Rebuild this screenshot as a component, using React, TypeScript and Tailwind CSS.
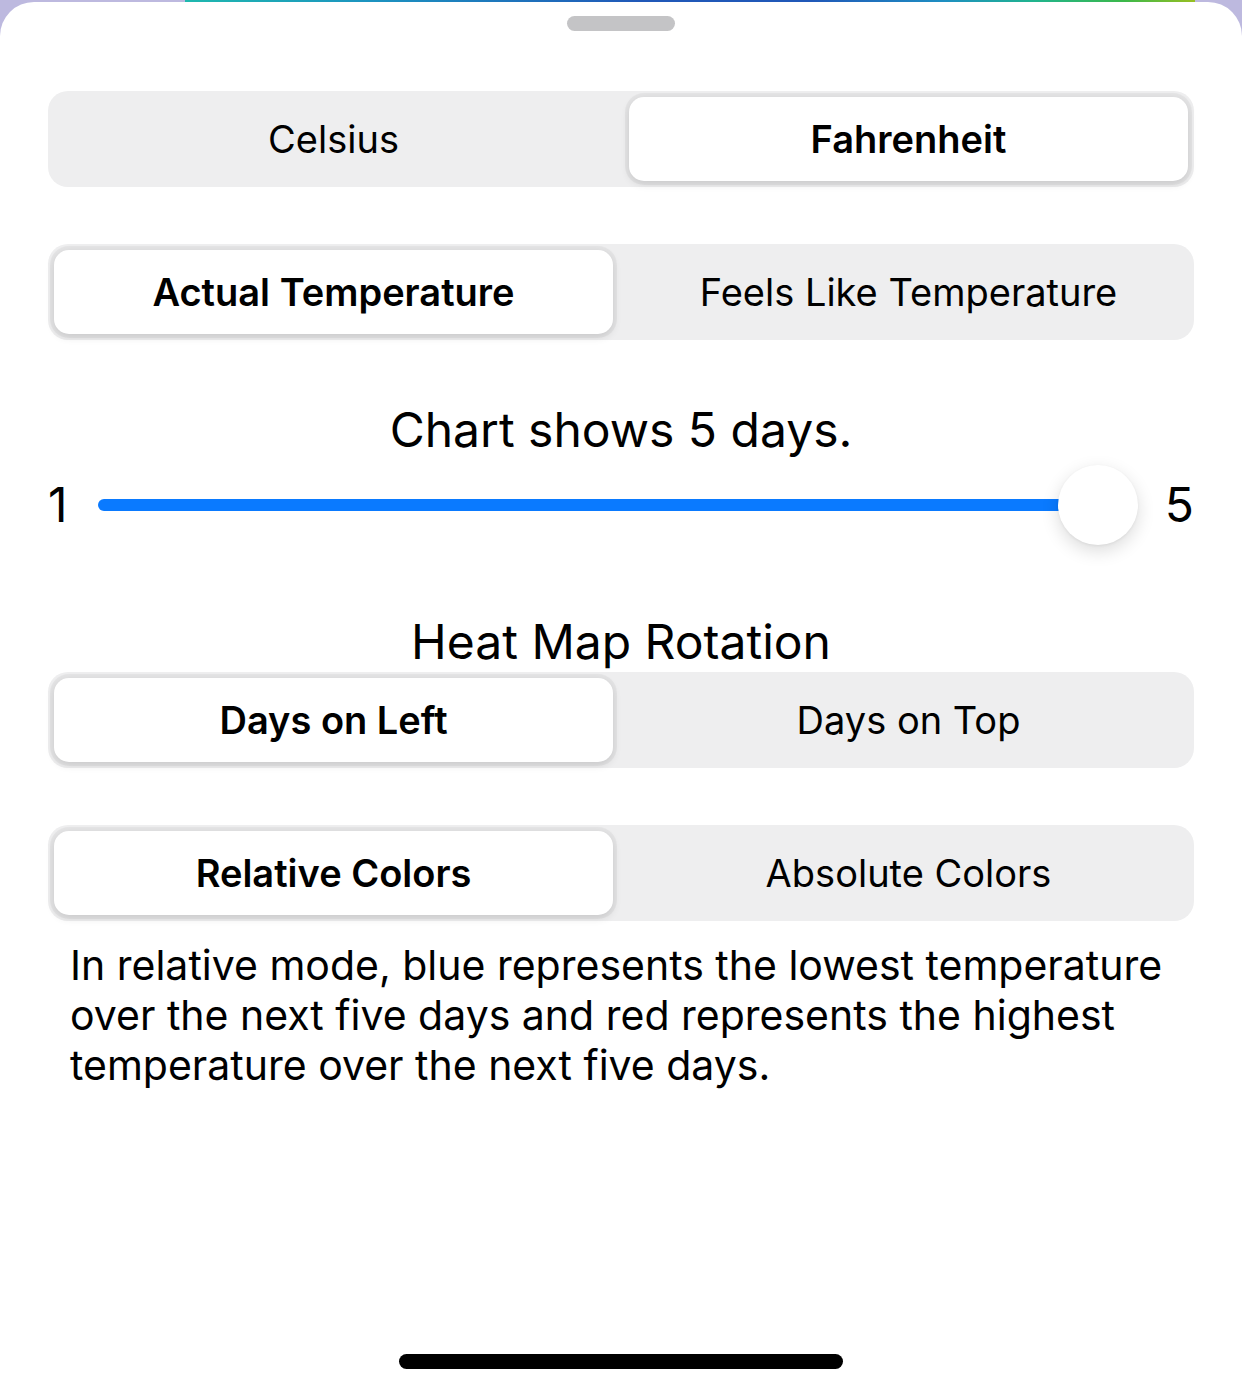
import React from 'react';

const font = { fontFamily: 'Inter, "Noto Sans", sans-serif' };

const Segmented = ({ options, selected }: { options: string[]; selected: number }) => (
  <div className="grid grid-cols-2 gap-[16px] h-[96px] rounded-[20px] bg-[#eeeeef] p-[6px]">
    {options.map((opt, i) =>
      i === selected ? (
        <div
          key={opt}
          className="flex items-center justify-center rounded-[15px] bg-white text-[38px] font-semibold text-black shadow-[0_3px_8px_rgba(0,0,0,0.12),0_0_0_4px_rgba(0,0,0,0.04)]"
        >
          {opt}
        </div>
      ) : (
        <div key={opt} className="flex items-center justify-center text-[38px] text-black">
          {opt}
        </div>
      )
    )}
  </div>
);

export default function App() {
  return (
    <div className="w-[1242px] h-[1393px] flex flex-col bg-[#bdb9df] overflow-hidden" style={font}>
      <div className="flex h-[2px] shrink-0">
        <div className="w-[185px]" />
        <div className="w-[1010px] bg-[linear-gradient(90deg,#1fb8ae_0%,#1c94c0_18%,#2058b8_45%,#2058b8_62%,#1e8ec2_75%,#20b48e_84%,#3cb84a_93%,#98bf22_100%)]" />
      </div>
      <div className="flex-1 flex flex-col bg-white rounded-t-[34px] px-[48px]">
        <div className="flex justify-center pt-[14px]">
          <div className="w-[108px] h-[15px] rounded-full bg-[#c4c4c6]" />
        </div>

        <div className="mt-[60px]">
          <Segmented options={['Celsius', 'Fahrenheit']} selected={1} />
        </div>
        <div className="mt-[57px]">
          <Segmented options={['Actual Temperature', 'Feels Like Temperature']} selected={0} />
        </div>

        <div className="mt-[61px] text-center text-[48px] leading-[58px] text-black">Chart shows 5 days.</div>

        <div className="flex items-center h-[90px] mt-[1px]">
          <span className="w-[50px] text-[48px] text-black">1</span>
          <div className="relative flex-1 flex items-center">
            <div className="h-[12px] flex-1 rounded-full bg-[#0a7aff]" />
            <div className="absolute right-[-40px] w-[80px] h-[80px] rounded-full bg-white shadow-[0_6px_18px_rgba(0,0,0,0.14),0_1px_3px_rgba(0,0,0,0.06)]" />
          </div>
          <span className="w-[96px] text-right text-[48px] text-black">5</span>
        </div>

        <div className="mt-[63px] text-center text-[48px] leading-[58px] text-black">Heat Map Rotation</div>
        <div className="mt-[1px]">
          <Segmented options={['Days on Left', 'Days on Top']} selected={0} />
        </div>
        <div className="mt-[57px]">
          <Segmented options={['Relative Colors', 'Absolute Colors']} selected={0} />
        </div>

        <p className="mt-[19px] pl-[22px] text-[41px] leading-[50px] text-black">
          In relative mode, blue represents the lowest temperature
          <br />
          over the next five days and red represents the highest
          <br />
          temperature over the next five days.
        </p>

        <div className="flex-1" />
        <div className="flex justify-center pb-[24px]">
          <div className="w-[444px] h-[15px] rounded-full bg-black" />
        </div>
      </div>
    </div>
  );
}
